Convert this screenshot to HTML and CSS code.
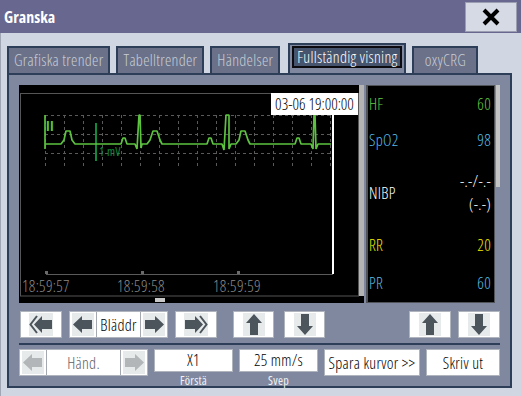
FILE: index.html
```html
<!DOCTYPE html>
<html>
<head>
	<meta charset="UTF-8">
	<title>Granska</title>
	<link rel="stylesheet" href="styles.css">
</head>
<body>
<div class="window">
	<div class="titlebar">
		<span class="title">Granska</span>
		<div class="close">
			<svg width="18" height="18" viewBox="0 0 18 18"><path d="M2 2 L16 16 M16 2 L2 16" stroke="#000" stroke-width="4"/></svg>
		</div>
	</div>

	<div class="tabs">
		<div class="tab">Grafiska trender</div>
		<div class="tab">Tabelltrender</div>
		<div class="tab">Händelser</div>
		<div class="tab active"><span>Fullständig visning</span></div>
		<div class="tab">oxyCRG</div>
	</div>

	<div class="panel">
		<div class="view">
			<div class="wave">
				<svg width="345" height="218" viewBox="0 0 345 218">
					<g transform="translate(-19 -85)">
						<rect x="20.5" y="93.5" width="338" height="202.5" fill="none" stroke="#555"/>
						<rect x="359" y="85" width="5" height="211" fill="#b4b4b4"/>
						<rect x="155" y="298" width="10" height="4" fill="#c8c8c8"/>
						<!-- raster -->
						<g stroke="#5a5a5a" stroke-dasharray="3 3" stroke-width="1">
							<path d="M45 115.5 H333 M45 134.5 H333 M45 153.5 H333"/>
							<path d="M45.5 115 V166 M64.5 115 V166 M83.5 115 V166 M102.5 115 V166 M121.5 115 V166 M140.5 115 V166 M159.5 115 V166 M178.5 115 V166 M197.5 115 V166 M216.5 115 V166 M235.5 115 V166 M254.5 115 V166 M273.5 115 V166 M292.5 115 V166 M311.5 115 V166 M330.5 115 V166"/>
						</g>
						<!-- 1 mV -->
						<rect x="95" y="123" width="2" height="38" fill="#118a3a"/>
						<text x="99" y="156" class="mv">1 mV</text>
						<text x="46" y="131" class="lead">II</text>
						<!-- EKG -->
						<path fill="none" stroke="#5cc240" stroke-width="1.7" stroke-linejoin="bevel"
							d="M45 115 V149 M45 144 H61 L64 140 L66 131 L70 131 L72 140 L75 144 H121 L123 138 L125 138 L127 144 H135 L137 149 L139 115 L140 115 L141 148 L142 144 H147 L150 140 L153 131 L157 131 L160 140 L162 144 H207 L209 138 L211 138 L213 144 H222 L224 150 L226 115 L229 115 L229 149 L231 144 H236 L239 140 L241 131 L245 131 L248 140 L250 144 H295 L297 138 L299 138 L301 144 H311 L313 149 L314 115 L315 115 L316 149 L318 144 H331"/>
						<rect x="332" y="115" width="2" height="159" fill="#fff"/>
						<!-- tidsaxel -->
						<path d="M46 274.5 H333" stroke="#5a5a5a"/>
						<rect x="45" y="271" width="3" height="3" fill="#6a6a6a"/>
						<rect x="141" y="271" width="3" height="3" fill="#6a6a6a"/>
						<rect x="237" y="271" width="3" height="3" fill="#6a6a6a"/>
						<text x="22" y="292" class="time">18:59:57</text>
						<text x="117" y="292" class="time">18:59:58</text>
						<text x="213" y="292" class="time">18:59:59</text>
					</g>
				</svg>
				<div class="stamp">03-06 19:00:00</div>
			</div>

			<div class="params">
				<div class="param hf first"><span>HF</span><span>60</span></div>
				<div class="param spo2"><span>SpO2</span><span>98</span></div>
				<div class="param nibp">
					<span>NIBP</span>
					<div class="nibp-val"><span>-.-/-.-</span><span>(-.-)</span></div>
				</div>
				<div class="param rr"><span>RR</span><span>20</span></div>
				<div class="param pr"><span>PR</span><span>60</span></div>
			</div>
			<div class="pscroll"></div>
		</div>

		<div class="row row1">
			<div class="btn icon first">
				<svg class="ico" width="24" height="23" viewBox="0 0 24 23"><path d="M8 3 L1.5 11.5 L8 20" fill="none" stroke="#4c545c" stroke-width="2"/><path d="M5 11.5 L13 3 V7 H23 V16 H13 V20 Z" fill="#4c545c"/></svg>
			</div>
			<div class="group browse">
				<div class="cell arrow"><svg class="ico" width="22" height="23" viewBox="0 0 22 23"><path d="M1 11.5 L10 3 V7 H20 V16 H10 V20 Z" fill="#4c545c"/></svg></div>
				<div class="cell label">Bläddr</div>
				<div class="cell arrow"><svg class="ico" width="22" height="23" viewBox="0 0 22 23"><path d="M21 11.5 L12 3 V7 H2 V16 H12 V20 Z" fill="#4c545c"/></svg></div>
			</div>
			<div class="btn icon">
				<svg class="ico" width="24" height="23" viewBox="0 0 24 23"><path d="M16 3 L22.5 11.5 L16 20" fill="none" stroke="#4c545c" stroke-width="2"/><path d="M19 11.5 L11 3 V7 H1 V16 H11 V20 Z" fill="#4c545c"/></svg>
			</div>
			<div class="btn icon up">
				<svg class="ico" width="22" height="23" viewBox="0 0 22 23"><path d="M11 1 L19 10 H15 V22 H7 V10 H3 Z" fill="#4c545c"/></svg>
			</div>
			<div class="btn icon down">
				<svg class="ico" width="22" height="23" viewBox="0 0 22 23"><path d="M11 22 L19 13 H15 V1 H7 V13 H3 Z" fill="#4c545c"/></svg>
			</div>
			<div class="btn icon up2">
				<svg class="ico" width="22" height="23" viewBox="0 0 22 23"><path d="M11 1 L19 10 H15 V22 H7 V10 H3 Z" fill="#4c545c"/></svg>
			</div>
			<div class="btn icon down2">
				<svg class="ico" width="22" height="23" viewBox="0 0 22 23"><path d="M11 22 L19 13 H15 V1 H7 V13 H3 Z" fill="#4c545c"/></svg>
			</div>
		</div>

		<div class="sep"></div>

		<div class="row row2">
			<div class="group events">
				<div class="cell arrow"><svg class="ico" width="22" height="23" viewBox="0 0 22 23"><path d="M1 11.5 L10 3 V7 H20 V16 H10 V20 Z" fill="#b2b6b8"/></svg></div>
				<div class="cell label dim">Händ.</div>
				<div class="cell arrow"><svg class="ico" width="22" height="23" viewBox="0 0 22 23"><path d="M21 11.5 L12 3 V7 H2 V16 H12 V20 Z" fill="#b2b6b8"/></svg></div>
			</div>
			<div class="field">
				<div class="box">X1</div>
				<div class="sub">Förstä</div>
			</div>
			<div class="field">
				<div class="box">25 mm/s</div>
				<div class="sub">Svep</div>
			</div>
			<div class="btn text save">Spara kurvor &gt;&gt;</div>
			<div class="btn text print">Skriv ut</div>
		</div>
	</div>
</div>
</body>
</html>
```

FILE: styles.css
```css
* {
	box-sizing: border-box;
}

body {
	margin: 0;
	font-family: "Open Sans", "Liberation Sans", sans-serif;
	font-stretch: 75%;
	font-weight: 300;
	font-size: 16px;
	letter-spacing: 0.3px;
	background-color: #d0d6e2;
}

.window {
	width: 521px;
	height: 396px;
	background-color: #d0d6e2;
	box-shadow: inset 1px 0 #a0a6b4;
	overflow: hidden;
}

.titlebar {
	height: 33px;
	background-color: #67678f;
	display: flex;
	align-items: center;
	justify-content: space-between;
	padding: 0 4px 0 4px;
}

.title {
	color: #fff;
	font-weight: bold;
	font-size: 16px;
	letter-spacing: 0;
}

.close {
	width: 52px;
	height: 30px;
	background-color: #d6dae4;
	border: 1px solid #9a9eb0;
	display: flex;
	align-items: center;
	justify-content: center;
}

/* flikar */
.tabs {
	height: 40px;
	display: flex;
	align-items: flex-end;
	gap: 6px;
	padding-left: 7px;
}

.tab {
	height: 27px;
	min-width: 66px;
	padding: 0 5px;
	border: 2px solid #2c3e58;
	border-bottom: none;
	background-color: #6a7189;
	color: #c8ccd4;
	line-height: 24px;
	text-align: center;
	white-space: nowrap;
}

.tab.active {
	height: 30px;
	margin-left: 2px;
	padding: 1px 2px 5px;
	background-color: #8088a0;
}

.tab.active span {
	display: block;
	height: 22px;
	padding: 0 3px;
	border: 2px solid #0c0c10;
	background-color: #46546e;
	color: #fff;
	line-height: 18px;
}

/* panel */
.panel {
	height: 315px;
	margin: 0 9px 0 7px;
	border: 2px solid #2c3e58;
	background-color: #8088a0;
	padding: 10px 10px 0 10px;
}

.view {
	display: flex;
	height: 218px;
}

.wave {
	position: relative;
	width: 345px;
	height: 218px;
	background-color: #000;
}

.wave svg {
	display: block;
}

.mv {
	fill: #118a3a;
	font-size: 12px;
	font-weight: 400;
}

.lead {
	fill: #5cc240;
	font-size: 14px;
	font-weight: bold;
}

.time {
	fill: #8a8a8a;
	font-size: 16px;
}

.stamp {
	position: absolute;
	left: 252px;
	top: 8px;
	width: 87px;
	height: 22px;
	background-color: #fff;
	color: #000;
	line-height: 22px;
	text-align: center;
	white-space: nowrap;
	letter-spacing: 0;
}

.params {
	width: 129px;
	height: 218px;
	margin-left: 2px;
	background-color: #000;
	border: 1px solid #505458;
	border-left-width: 2px;
	padding: 0 3px 0 1px;
}

.param {
	height: 38px;
	display: flex;
	align-items: center;
	justify-content: space-between;
}

.param.first {
	height: 35px;
}

.hf { color: #66c844; }
.spo2 { color: #58bce4; }
.nibp { color: #fff; height: 67px; }
.rr { color: #f4e800; }
.pr { color: #58bce4; }

.nibp-val {
	display: flex;
	flex-direction: column;
	align-items: flex-end;
	gap: 1px;
	padding-bottom: 1px;
}

.pscroll {
	width: 4px;
	height: 102px;
	margin-left: 1px;
	background-color: #c4c4c4;
}

/* knappar */
.row {
	display: flex;
	align-items: flex-start;
}

.row1 {
	margin-top: 8px;
	height: 27px;
}

.btn {
	height: 27px;
	background-color: #fff;
	border: 1px solid #b0b4bc;
	display: flex;
	align-items: center;
	justify-content: center;
	color: #000;
	white-space: nowrap;
}

.btn.icon {
	width: 42px;
	margin-left: 7px;
}

.btn.first {
	margin-left: 1px;
}

.btn.up {
	width: 41px;
	margin-left: 16px;
}

.btn.down {
	width: 41px;
	margin-left: 10px;
}

.btn.up2 {
	margin-left: auto;
}

.ico {
	display: block;
	background-color: #e6eaea;
}

.group {
	display: flex;
	height: 27px;
	background-color: #fff;
	border: 1px solid #b0b4bc;
}

.group.browse {
	margin-left: 7px;
}

.cell {
	display: flex;
	align-items: center;
	justify-content: center;
}

.cell.arrow {
	width: 26px;
}

.cell.label {
	border-left: 1px solid #a4a8b0;
	border-right: 1px solid #a4a8b0;
}

.browse .cell.label {
	width: 45px;
}

.events .cell.label {
	width: 75px;
}

.dim {
	color: #5c6068;
}

.sep {
	height: 2px;
	margin-top: 5px;
	background-color: #2c3e58;
}

.row2 {
	margin-top: 4px;
}

.field {
	width: 79px;
	margin-left: 6px;
}

.field .box {
	height: 23px;
	background-color: #fff;
	border: 1px solid #b0b4bc;
	text-align: center;
	line-height: 21px;
}

.sub {
	margin-top: 2px;
	color: #f2f2f2;
	font-size: 12px;
	font-weight: 400;
	line-height: 13px;
	text-align: center;
}

.btn.text {
	margin-left: 6px;
}

.btn.save {
	width: 96px;
}

.btn.print {
	width: 74px;
}
```
